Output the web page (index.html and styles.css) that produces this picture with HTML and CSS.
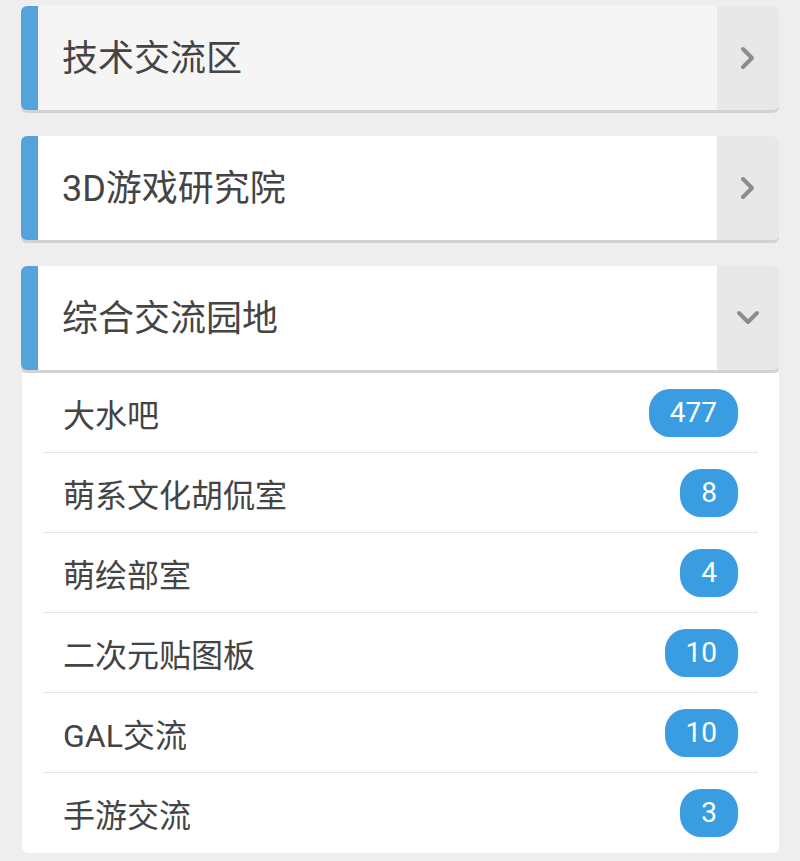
FILE: index.html
```html
<!DOCTYPE html>
<html lang="zh-CN">
    <head>
        <meta charset="UTF-8" />
        <meta name="viewport" content="width=device-width, initial-scale=1.0" />
        <title>论坛版块</title>
        <link rel="stylesheet" href="styles.css">
    </head>
    <body>
        <!-- 版块分组 -->
        <section class="group">
            <div class="group-head pressed">
                <h2 class="group-title">技术交流区</h2>
                <span class="group-arrow">
                    <svg width="16" height="24" viewBox="0 0 16 24"><polyline points="3,3 12,12 3,21" /></svg>
                </span>
            </div>
        </section>

        <section class="group">
            <div class="group-head">
                <h2 class="group-title">3D游戏研究院</h2>
                <span class="group-arrow">
                    <svg width="16" height="24" viewBox="0 0 16 24"><polyline points="3,3 12,12 3,21" /></svg>
                </span>
            </div>
        </section>

        <!-- 展开的分组 -->
        <section class="group open">
            <div class="group-head">
                <h2 class="group-title">综合交流园地</h2>
                <span class="group-arrow">
                    <svg width="24" height="16" viewBox="0 0 24 16"><polyline points="3,3 12,12 21,3" /></svg>
                </span>
            </div>
            <ul class="board-list">
                <li><a href="#">大水吧</a><span class="count">477</span></li>
                <li><a href="#">萌系文化胡侃室</a><span class="count">8</span></li>
                <li><a href="#">萌绘部室</a><span class="count">4</span></li>
                <li><a href="#">二次元贴图板</a><span class="count">10</span></li>
                <li><a href="#">GAL交流</a><span class="count">10</span></li>
                <li><a href="#">手游交流</a><span class="count">3</span></li>
            </ul>
        </section>
    </body>
</html>
```

FILE: styles.css
```css
html,
body {
    margin: 0;
    padding: 0;
}
body {
    background: #eeeeee;
    padding: 6px 21px 8px;
    font-family: Roboto, "Noto Sans CJK SC", sans-serif;
    color: #444;
}

ul {
    margin: 0;
    padding: 0;
    list-style: none;
}

/* 분组 */
.group {
    margin-bottom: 26px;
}
.group.open {
    margin-bottom: 0;
}

/* 분组 머리 : 왼쪽 파란 줄 + 제목 + 화살표 */
.group-head {
    display: flex;
    height: 104px;
    background: #fff;
    border-left: 17px solid #55a3dd;
    border-radius: 6px;
    box-shadow: 0 3px 0 #d2d2d2;
    overflow: hidden;
}
.group-head.pressed {
    background: #f5f5f5;
}

.group-title {
    flex: 1;
    margin: 0;
    padding-left: 24px;
    font-size: 36px;
    font-weight: normal;
    line-height: 106px;
    color: #444;
}

.group-arrow {
    width: 62px;
    display: flex;
    align-items: center;
    justify-content: center;
    background: #e8e8e8;
}
.group-arrow polyline {
    fill: none;
    stroke: #8c8c8c;
    stroke-width: 4;
    stroke-linecap: round;
    stroke-linejoin: round;
}

/* 하위 게시판 목록 */
.board-list {
    margin: 3px 0 0 1px;
    padding: 0 21px;
    background: #fff;
    border-radius: 0 0 6px 6px;
}
.board-list li {
    display: flex;
    align-items: center;
    justify-content: space-between;
    height: 79px;
    padding: 0 20px;
    border-bottom: 1px solid #e6e6e6;
}
.board-list li:last-child {
    border-bottom: 0;
    height: 80px;
}
.board-list a {
    color: #444;
    text-decoration: none;
    font-size: 32px;
}

.count {
    height: 48px;
    padding: 0 21px;
    border-radius: 21px;
    background: #3a9de2;
    color: #fff;
    font-size: 28px;
    line-height: 48px;
    text-align: center;
}
```
